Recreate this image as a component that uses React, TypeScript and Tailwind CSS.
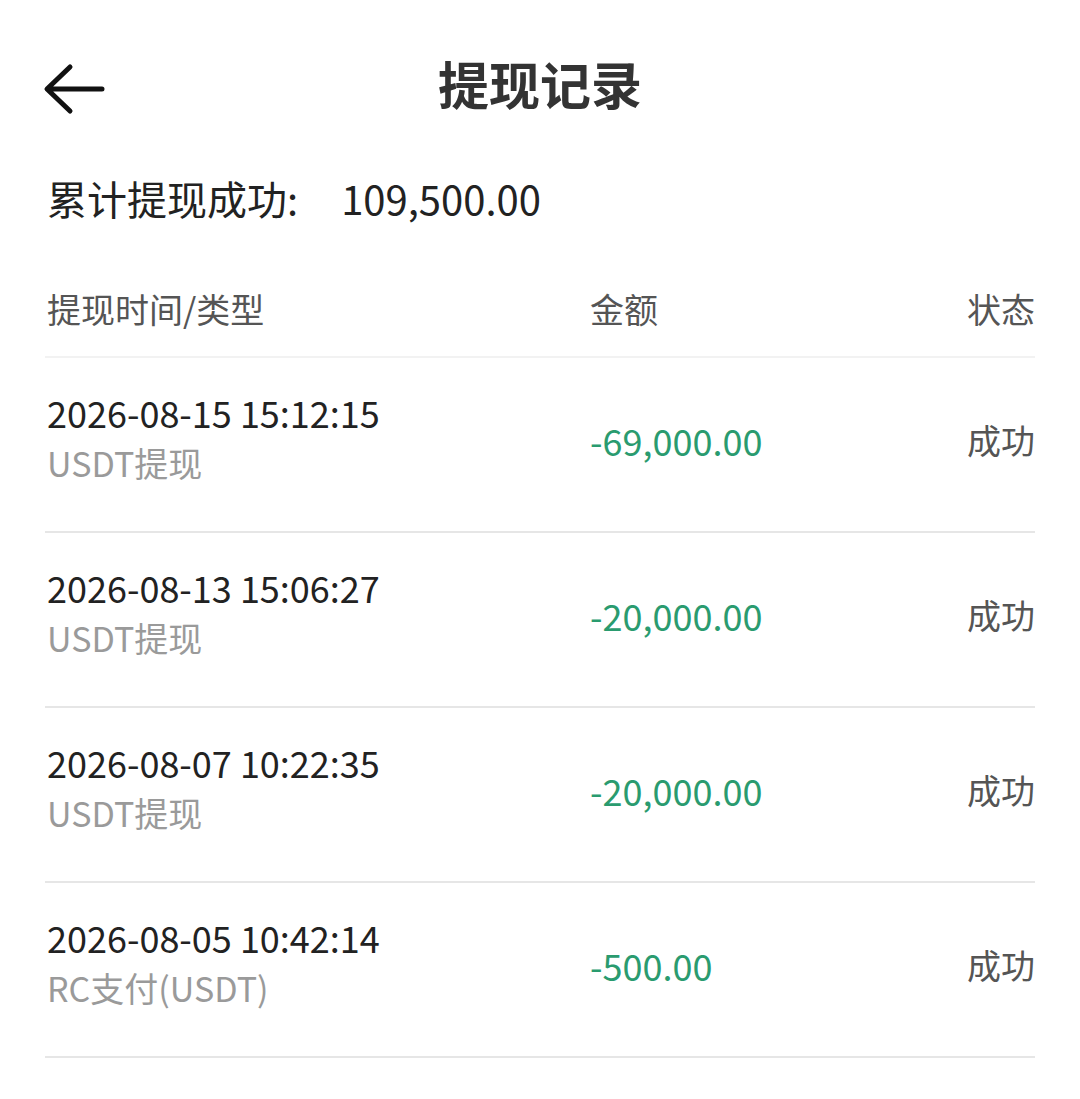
import React from "react";

const rows = [
  { date: "2026-08-15 15:12:15", type: "USDT提现", amount: "-69,000.00" },
  { date: "2026-08-13 15:06:27", type: "USDT提现", amount: "-20,000.00" },
  { date: "2026-08-07 10:22:35", type: "USDT提现", amount: "-20,000.00" },
  { date: "2026-08-05 10:42:14", type: "RC支付(USDT)", amount: "-500.00" },
];

export default function App() {
  return (
    <div
      className="w-[1080px] h-[1099px] bg-white overflow-hidden"
      style={{ fontFamily: '"Noto Sans CJK SC", "Noto Sans", sans-serif' }}
    >
      <div className="relative h-[180px] flex items-start">
        <div className="absolute left-[40px] top-[60px]">
          <svg width="70" height="60" viewBox="0 0 70 60" fill="none">
            <path d="M62 29H8M30 7L7 29L30 51" stroke="#111" strokeWidth="5" strokeLinecap="round" strokeLinejoin="round" />
          </svg>
        </div>
        <div className="w-full text-center pt-[53px] text-[51px] leading-[60px] font-bold text-[#333]">提现记录</div>
      </div>
      <div className="pl-[47px] flex items-center h-[44px] -mt-[4px] text-[40px] text-[#222]">
        <span>累计提现成功:</span>
        <span className="ml-[43px]">109,500.00</span>
      </div>
      <div className="px-[45px] mt-[60px]">
        <div className="flex items-center h-[78px] border-b-2 border-[#f2f2f2] text-[34px] text-[#555] pb-[20px]">
          <div className="w-[545px] pl-[2px]">提现时间/类型</div>
          <div className="flex-1">金额</div>
          <div>状态</div>
        </div>
        {rows.map((r, i) => (
          <div key={i} className="flex items-center h-[175px] border-b-2 border-[#e6e6e6]">
            <div className="w-[545px] pl-[2px] -mt-[14px]">
              <div className="text-[36px] leading-[50px] text-[#222]">{r.date}</div>
              <div className="text-[34px] leading-[52px] text-[#9a9a9a]">{r.type}</div>
            </div>
            <div className="flex-1 text-[36px] text-[#2a9b6f] -mt-[10px]">{r.amount}</div>
            <div className="text-[34px] text-[#555] -mt-[10px]">成功</div>
          </div>
        ))}
      </div>
    </div>
  );
}
